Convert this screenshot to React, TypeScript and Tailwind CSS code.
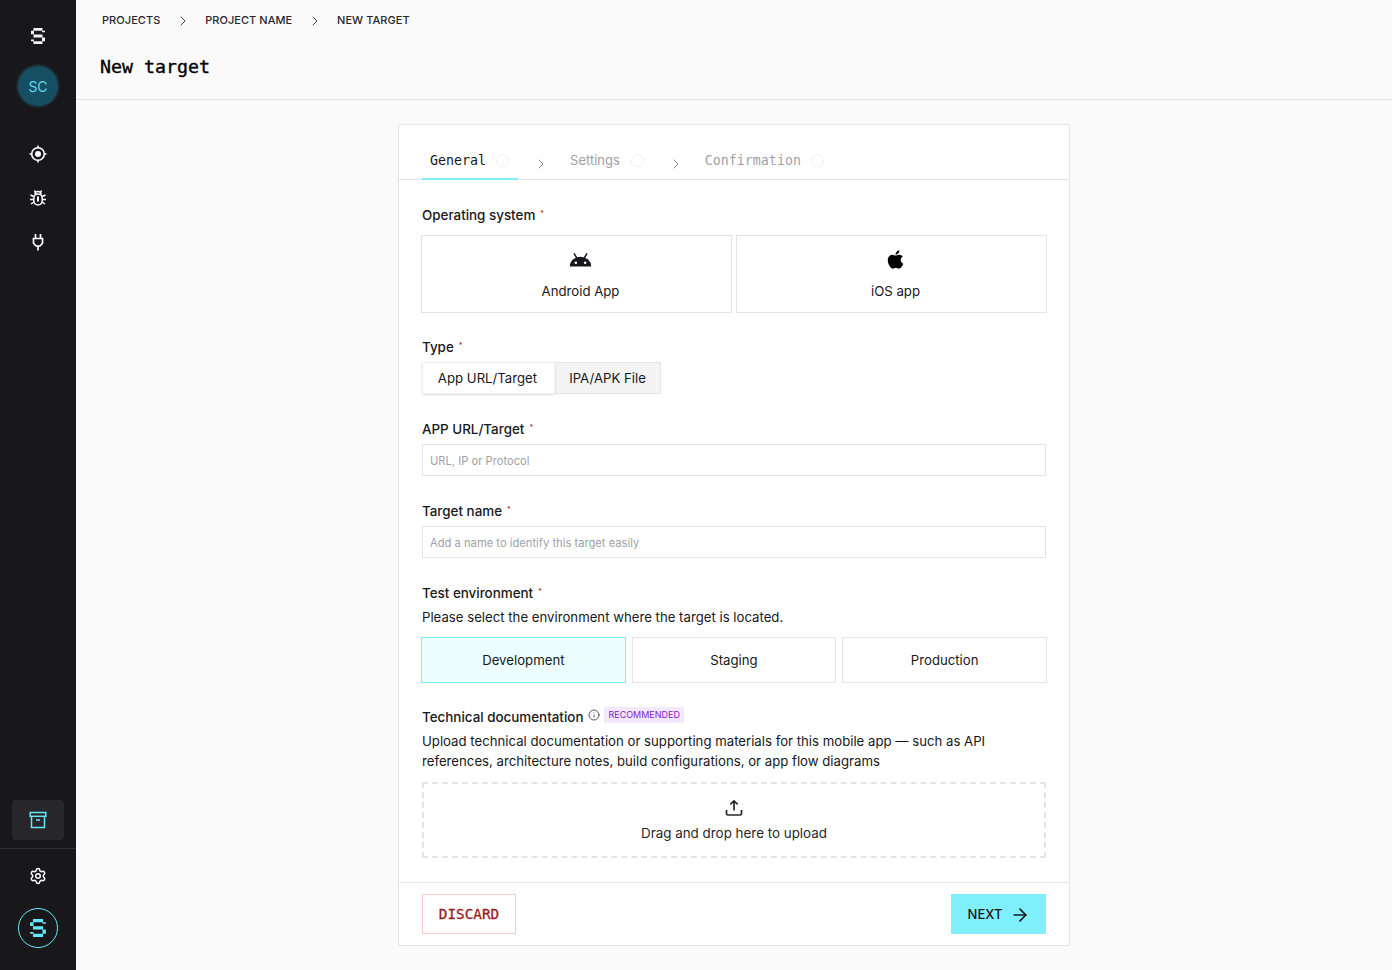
import React from "react"
import { ArrowRight, ChevronRight, Info, Settings } from "lucide-react"
import { FaApple } from "react-icons/fa"

const mono = "font-['DejaVu_Sans_Mono',monospace]"

function LogoS({ className }: { className?: string }) {
  return (
    <svg viewBox="0 0 14 16" className={className} fill="currentColor">
      <path d="M2.500 0h9v2.800h-9zM0 2.800h3v3.400H0zM11 2.800h3v1.400h-3zM2.500 6.400h9v3h-9zM11 9.400h3v3.800h-3zM0 11.600h3v1.600H0zM2.500 13.200h9V16h-9z" />
    </svg>
  )
}

function Target() {
  return (
    <svg viewBox="0 0 18 18" className="w-[18px] h-[18px]" fill="none" stroke="currentColor" strokeWidth="1.600">
      <circle cx="9" cy="9" r="6.300" />
      <circle cx="9" cy="9" r="3" fill="currentColor" stroke="none" />
      <path d="M9 0.500v2.200M9 15.300v2.200M0.500 9h2.200M15.300 9h2.200" />
    </svg>
  )
}

function BugIcon() {
  return (
    <svg viewBox="0 0 18 18" className="w-[18px] h-[18px]" fill="none" stroke="currentColor" strokeWidth="1.500">
      <path d="M6 5.500a3 3 0 0 1 6 0" />
      <rect x="4.800" y="5" width="8.400" height="11" rx="4.200" />
      <path d="M6.500 3.500 5.500 1.500M11.500 3.500l1-2M1.500 6l3.300 1.500M16.500 6l-3.300 1.500M1 10.500h3.800M17 10.500h-3.800M2 15l3-2M16 15l-3-2" />
      <path d="M9 7.500v5" strokeWidth="2" />
    </svg>
  )
}

function PlugIcon() {
  return (
    <svg viewBox="0 0 18 18" className="w-[18px] h-[18px]" fill="none" stroke="currentColor" strokeWidth="1.700">
      <path d="M6.500 1v4.500M11.500 1v4.500M4.500 5.500h9v4.700L11 13H7L4.500 10.200zM9 13v4.500" />
    </svg>
  )
}

function ArchiveIcon() {
  return (
    <svg viewBox="0 0 18 18" className="w-[18px] h-[18px]" fill="none" stroke="currentColor" strokeWidth="1.500">
      <rect x="1.200" y="1.500" width="15.600" height="3.800" />
      <path d="M2.500 5.300v11.200h13V5.300M7 9h4" />
    </svg>
  )
}

function AndroidHead() {
  return (
    <svg viewBox="0 0 24 15" className="w-[23px] h-[14px]" fill="currentColor">
      <path d="M0.500 14.500a11.500 10.500 0 0 1 23 0z" />
      <path d="M5 0.500 8.500 6M19 0.500l-3.500 5.500" stroke="currentColor" strokeWidth="1.600" />
      <circle cx="7" cy="10.500" r="1.400" fill="#fff" />
      <circle cx="17" cy="10.500" r="1.400" fill="#fff" />
    </svg>
  )
}

function UploadIcon() {
  return (
    <svg viewBox="0 0 18 18" className="w-[18px] h-[18px]" fill="none" stroke="#27272a" strokeWidth="1.700">
      <path d="M9 11.500V1.800M5.300 5.300 9 1.800l3.700 3.500M1.500 11v3.500a1.500 1.500 0 0 0 1.500 1.500h12a1.500 1.500 0 0 0 1.500-1.500V11" />
    </svg>
  )
}

function Label({ children }: { children: React.ReactNode }) {
  return (
    <div className="h-5 flex items-center text-[13.400px] font-medium text-[#18181b]">
      {children}
      <span className="ml-[5px] -mt-px text-[7px] text-[#b91c1c]">*</span>
    </div>
  )
}

function Step({ title, active, sans }: { title: string; active?: boolean; sans?: boolean }) {
  return (
    <div className={`h-[55px] pt-5 pl-2 pr-[9px] flex items-center border-b-2 ${sans ? "gap-[11px]" : "gap-[10px]"} ${active ? "border-[#7eeffb]" : "border-transparent"}`}>
      <span className={`${sans ? "text-[13px] font-['Inter',sans-serif]" : `text-[13.300px] ${mono}`} ${active ? "text-[#18181b]" : "text-[#a1a1aa]"}`}>
        {title}
      </span>
      <span className="w-[13px] h-[13px] -mt-px rounded-full border border-[#f0f0f0]" />
    </div>
  )
}

function Chevron() {
  return <ChevronRight size={16} className="ml-[15px] mr-[13px] mt-[23px] text-[#71717a]" strokeWidth={1.300} />
}

const navIcons = [Target, BugIcon, PlugIcon]

export default function App() {
  return (
    <div className="h-[970px] flex bg-[#fafafa] font-['Inter',sans-serif] overflow-hidden">
      <aside className="w-[76px] shrink-0 bg-[#18181b] flex flex-col items-center text-white">
        <LogoS className="mt-7 w-[14px] h-4 text-[#f4f4f5]" />
        <div className="mt-[22px] w-10 h-10 rounded-full bg-[#164e63] ring-2 ring-[#1f2a30] flex items-center justify-center text-[14px] text-[#67d8ea]">
          SC
        </div>
        <div className="mt-[39px] flex flex-col gap-[26px]">
          {navIcons.map((Icon, i) => (
            <Icon key={i} />
          ))}
        </div>
        <div className="mt-auto w-[52px] h-10 rounded bg-[#27272a] flex items-center justify-center text-[#67e8f9]">
          <ArchiveIcon />
        </div>
        <div className="w-full mt-2 border-t border-[#2e2e33] pt-[18px] pb-[22px] flex flex-col items-center">
          <Settings size={18} strokeWidth={2} />
          <div className="mt-[23px] w-10 h-10 rounded-full border border-[#67e8f9] flex items-center justify-center text-[#67e8f9]">
            <LogoS className="w-[16px] h-[18px]" />
          </div>
        </div>
      </aside>

      <div className="flex-1 min-w-0 flex flex-col">
        <header className="h-[100px] shrink-0 border-b border-[#e4e4e7] px-6">
          <nav className="h-10 pt-px ml-[2px] flex items-center text-[11px] tracking-[0.05px] text-[#27272a] font-medium">
            <span>PROJECTS</span>
            <ChevronRight size={16} strokeWidth={1.300} className="mx-[14.400px]" />
            <span>PROJECT NAME</span>
            <ChevronRight size={16} strokeWidth={1.300} className="mx-[14.400px]" />
            <span>NEW TARGET</span>
          </nav>
          <h1 className={`mt-3 text-[18.300px] leading-[30px] font-normal [-webkit-text-stroke:0.35px_#000] text-black ${mono}`}>New target</h1>
        </header>

        <main className="flex-1 flex justify-center pt-6">
          <div className="w-[672px] h-[822px] bg-white border border-[#e4e4e7] rounded-[2px] flex flex-col">
            <div className="h-[55px] px-[23px] flex items-center border-b border-[#e4e4e7]">
              <Step title="General" active />
              <Chevron />
              <Step title="Settings" sans />
              <Chevron />
              <Step title="Confirmation" />
            </div>

            <div className="flex-1 px-[23px] pt-[25px] text-[13.200px] text-[#18181b]">
              <Label>Operating system</Label>
              <div className="mt-[10px] -mx-px flex gap-1">
                <div className="w-[311px] h-[78px] border border-[#e4e4e7] flex flex-col items-center pt-[17px] pl-2">
                  <AndroidHead />
                  <span className="mt-[14px] leading-5">Android App</span>
                </div>
                <div className="w-[311px] h-[78px] border border-[#e4e4e7] flex flex-col items-center pt-[13px] pl-2">
                  <FaApple className="w-[21px] h-[21px] text-black" />
                  <span className="mt-[11px] leading-5">iOS app</span>
                </div>
              </div>

              <div className="mt-6"><Label>Type</Label></div>
              <div className="mt-[5px] flex h-8">
                <div className="w-[133px] pr-0.5 pt-0.5 bg-white border border-[#f0f0f0] shadow-sm flex items-center justify-center z-10">App URL/Target</div>
                <div className="w-[106px] pt-0.5 bg-[#f4f4f5] border border-[#e4e4e7] border-l-0 flex items-center justify-center">IPA/APK File</div>
              </div>

              <div className="mt-[25px]"><Label>APP URL/Target</Label></div>
              <input placeholder="URL, IP or Protocol" className="mt-[5px] block w-full h-8 px-[7px] pt-0.5 border border-[#e4e4e7] text-[11.200px] placeholder:text-[#a1a1aa] outline-none" />

              <div className="mt-[25px]"><Label>Target name</Label></div>
              <input placeholder="Add a name to identify this target easily" className="mt-[5px] block w-full h-8 px-[7px] pt-0.5 border border-[#e4e4e7] text-[11.200px] placeholder:text-[#a1a1aa] outline-none" />

              <div className="mt-[25px]"><Label>Test environment</Label></div>
              <p className="mt-1 leading-5">Please select the environment where the target is located.</p>
              <div className="mt-[10px] -mx-px grid grid-cols-3 gap-[6px] h-[46px]">
                <div className="pt-0.5 border border-[#7eeffb] bg-[#ecfeff] flex items-center justify-center">Development</div>
                <div className="pt-0.5 border border-[#e4e4e7] flex items-center justify-center">Staging</div>
                <div className="pt-0.5 border border-[#e4e4e7] flex items-center justify-center">Production</div>
              </div>

              <div className="mt-6 h-5 flex items-center text-[13.400px] font-medium">
                Technical documentation
                <Info size={12} strokeWidth={1.700} className="ml-[5px] -mt-1 text-[#3f3f46]" />
                <span className="ml-1 -mt-1 h-4 px-1 bg-[#f3e8ff] text-[#7e22ce] text-[9px] font-normal flex items-center">RECOMMENDED</span>
              </div>
              <p className="mt-1 leading-5">
                Upload technical documentation or supporting materials for this mobile app — such as API references, architecture notes, build configurations, or app flow diagrams
              </p>
              <div className="mt-[11px] h-[76px] border-2 border-dashed border-[#e4e4e7] flex flex-col items-center pt-[15px]">
                <UploadIcon />
                <span className="mt-1.5 leading-5 text-[13.400px] text-[#27272a]">Drag and drop here to upload</span>
              </div>
            </div>

            <div className="h-[63px] px-[23px] border-t border-[#e4e4e7] flex items-center justify-between">
              <button className={`h-10 w-[94px] pt-0.5 border border-[#fecaca] text-[14.300px] text-[#991b1b] [-webkit-text-stroke:0.3px_#991b1b] ${mono}`}>DISCARD</button>
              <button className="h-10 w-[95px] pt-px bg-[#7eeffb] flex items-center justify-center gap-[8px] pl-[1px] text-[13px] font-medium text-[#18181b]">
                NEXT <ArrowRight size={20} strokeWidth={2} />
              </button>
            </div>
          </div>
        </main>
      </div>
    </div>
  )
}
